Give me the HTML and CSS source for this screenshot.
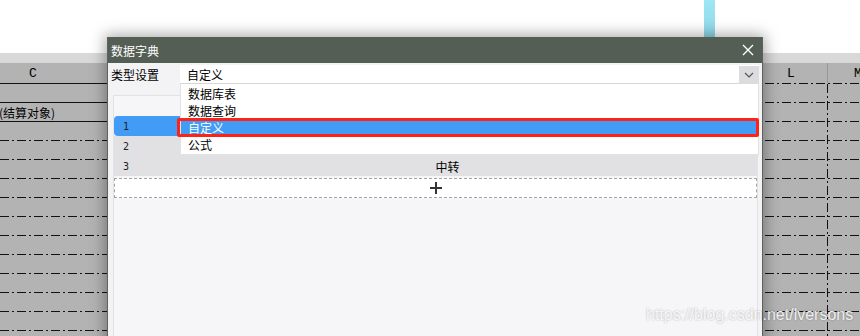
FILE: index.html
```html
<!DOCTYPE html>
<html lang="zh-CN">
<head>
    <meta charset="UTF-8">
    <title>数据字典</title>
    <link rel="stylesheet" href="styles.css">
</head>
<body>
    <div class="page">
        <!-- 顶部空白区 -->
        <div class="top-area">
            <div class="blue-bar"></div>
        </div>

        <!-- 背后的报表 -->
        <div class="sheet">
            <div class="sheet-band"></div>
            <div class="sheet-head solid-left">
                <span class="col col-c">C</span>
                <span class="col-gap"></span>
                <span class="col col-l">L</span>
                <span class="col col-m">M</span>
            </div>
            <div class="sheet-body">
                <div class="sheet-row solid-left"></div>
                <div class="sheet-row solid-left"><span class="cell-text">(结算对象)</span></div>
                <div class="sheet-row"></div>
                <div class="sheet-row"></div>
                <div class="sheet-row"></div>
                <div class="sheet-row"></div>
                <div class="sheet-row"></div>
                <div class="sheet-row"></div>
                <div class="sheet-row"></div>
                <div class="sheet-row"></div>
                <div class="sheet-row"></div>
                <div class="sheet-row"></div>
                <div class="sheet-row"></div>
            </div>
        </div>

        <!-- 数据字典弹窗 -->
        <div class="dialog">
            <div class="dialog-title">
                <span>数据字典</span>
                <svg class="close-icon" width="12" height="12" viewBox="0 0 12 12">
                    <path d="M1 1 L11 11 M11 1 L1 11" stroke="#fff" stroke-width="1.4" fill="none"/>
                </svg>
            </div>
            <div class="dialog-body">
                <div class="form-row">
                    <span class="field-label">类型设置</span>
                    <div class="select">
                        <span class="select-value">自定义</span>
                        <span class="select-btn">
                            <svg width="10" height="6" viewBox="0 0 10 6">
                                <path d="M1 1 L5 5 L9 1" stroke="#555" stroke-width="1.2" fill="none"/>
                            </svg>
                        </span>
                        <ul class="dropdown-list">
                            <li>数据库表</li>
                            <li>数据查询</li>
                            <li class="selected">自定义</li>
                            <li>公式</li>
                        </ul>
                    </div>
                </div>

                <div class="panel">
                    <div class="panel-head"></div>
                    <div class="list-row active"><span class="num">1</span><span class="name"></span></div>
                    <div class="list-row"><span class="num">2</span><span class="name"></span></div>
                    <div class="list-row"><span class="num">3</span><span class="name">中转</span></div>
                    <div class="add-row">
                        <svg width="12" height="12" viewBox="0 0 12 12">
                            <path d="M6 0 V12 M0 6 H12" stroke="#333" stroke-width="2" fill="none"/>
                        </svg>
                    </div>
                </div>
            </div>
        </div>

        <div class="watermark">https://blog.csdn.net/lversons</div>
    </div>
</body>
</html>
```

FILE: styles.css
```css
body {
    margin: 0;
    font-family: 'Noto Sans CJK SC', sans-serif;
    font-size: 12px;
    color: #000;
}

.page {
    position: relative;
    width: 860px;
    height: 336px;
    overflow: hidden;
    background: #b3b3b3;
}

.top-area {
    height: 53px;
    background: #fff;
}

.blue-bar {
    margin-left: 704px;
    width: 11px;
    height: 37px;
    background: linear-gradient(#a0e6f4, #8ed7e8);
}

.sheet-band {
    height: 10px;
    background: #d9d9d9;
}

/* 行线：点划线，左侧前几行为实线 */
.sheet-head,
.sheet-row {
    background-image: repeating-linear-gradient(to right, #111 0 9px, transparent 9px 12px, #111 12px 14px, transparent 14px 17px);
    background-size: 100% 1px;
    background-position: left bottom;
    background-repeat: no-repeat;
}

.sheet-head.solid-left,
.sheet-row.solid-left {
    background-image: linear-gradient(#111, #111),
        repeating-linear-gradient(to right, #111 0 9px, transparent 9px 12px, #111 12px 14px, transparent 14px 17px);
    background-size: 107px 1px, 100% 1px;
    background-position: left bottom, left bottom;
}

.sheet-head {
    display: flex;
    height: 21px;
    font-family: 'Liberation Mono', monospace;
    font-size: 13px;
}

.col {
    display: flex;
    align-items: center;
    justify-content: center;
    height: 20px;
    flex-shrink: 0;
}

.col-c {
    width: 66px;
}

.col-gap {
    width: 689px;
    flex-shrink: 0;
}

.col-l {
    width: 72px;
    border-right: 1px solid #979797;
}

.col-m {
    width: 60px;
}

.sheet-body {
    height: 260px;
    background-image: repeating-linear-gradient(to bottom, #111 0 9px, transparent 9px 12px, #111 12px 14px, transparent 14px 17px);
    background-size: 1px 100%;
    background-position: 827px 0;
    background-repeat: no-repeat;
}

.sheet-row {
    height: 19px;
    display: flex;
    align-items: center;
}

.cell-text {
    font-size: 12px;
    margin-left: -1px;
}

/* 弹窗 */
.dialog {
    position: absolute;
    left: 107px;
    top: 37px;
    width: 654px;
    height: 320px;
    border: 1px solid #5a645a;
    border-top: none;
    background: #f3f3f5;
    box-shadow: 0 0 14px 2px rgba(0, 0, 0, 0.35);
}

.dialog-title {
    height: 26px;
    display: flex;
    align-items: center;
    justify-content: space-between;
    padding: 0 8px 0 3px;
    background: #545e55;
    color: #fff;
    font-size: 12px;
}

.dialog-body {
    padding: 2px 3px 0 3px;
}

.form-row {
    display: flex;
    align-items: center;
    height: 19px;
}

.field-label {
    width: 69px;
    font-size: 12px;
}

.select {
    position: relative;
    flex: 1;
    height: 19px;
    display: flex;
    align-items: center;
    background: #fff;
    box-shadow: inset 0 -1px 0 #d6d6d8;
}

.select-value {
    flex: 1;
    padding-left: 7px;
    font-size: 12px;
}

.select-btn {
    width: 20px;
    height: 18px;
    display: flex;
    align-items: center;
    justify-content: center;
    background: #dcdcdf;
}

.dropdown-list {
    position: absolute;
    top: 19px;
    left: 0;
    right: 0;
    margin: 0;
    padding: 1px 0;
    list-style: none;
    background: #fff;
    border: 1px solid #e2e2e4;
    border-top: none;
    z-index: 2;
}

.dropdown-list li {
    height: 17px;
    line-height: 17px;
    padding-left: 7px;
    font-size: 12px;
    overflow: hidden;
}

.dropdown-list li.selected {
    position: relative;
    overflow: visible;
    background: #429cf5;
    color: #fff;
}

/* 红色标注框 */
.dropdown-list li.selected::after {
    content: '';
    position: absolute;
    left: -4px;
    right: -1px;
    top: -1px;
    bottom: -1px;
    border: 3px solid #ff2216;
    border-radius: 2px;
}

.panel {
    margin: 11px 1px 0 2px;
    border: 1px solid #e2e2e4;
    border-bottom: none;
    background: #f6f6f8;
    height: 240px;
}

.panel-head {
    height: 20px;
}

.list-row {
    display: flex;
    align-items: center;
    height: 20px;
    background: #e1e1e3;
}

.list-row.active {
    background: #429cf5;
    border-radius: 4px 0 0 4px;
}

.num {
    width: 24px;
    text-align: center;
    font-family: 'DejaVu Sans Mono', monospace;
    font-size: 10px;
    color: #222;
}

.name {
    flex: 1;
    text-align: center;
    font-size: 12px;
}

.add-row {
    margin-top: 2px;
    height: 18px;
    display: flex;
    align-items: center;
    justify-content: center;
    background: #fff;
    border: 1px dashed #a4a4a4;
}

.watermark {
    position: absolute;
    left: 646px;
    top: 306px;
    font-family: 'Liberation Sans', sans-serif;
    font-size: 16px;
    color: rgba(255, 255, 255, 0.85);
    text-shadow: 0 0 2px rgba(0, 0, 0, 0.3);
}
```
